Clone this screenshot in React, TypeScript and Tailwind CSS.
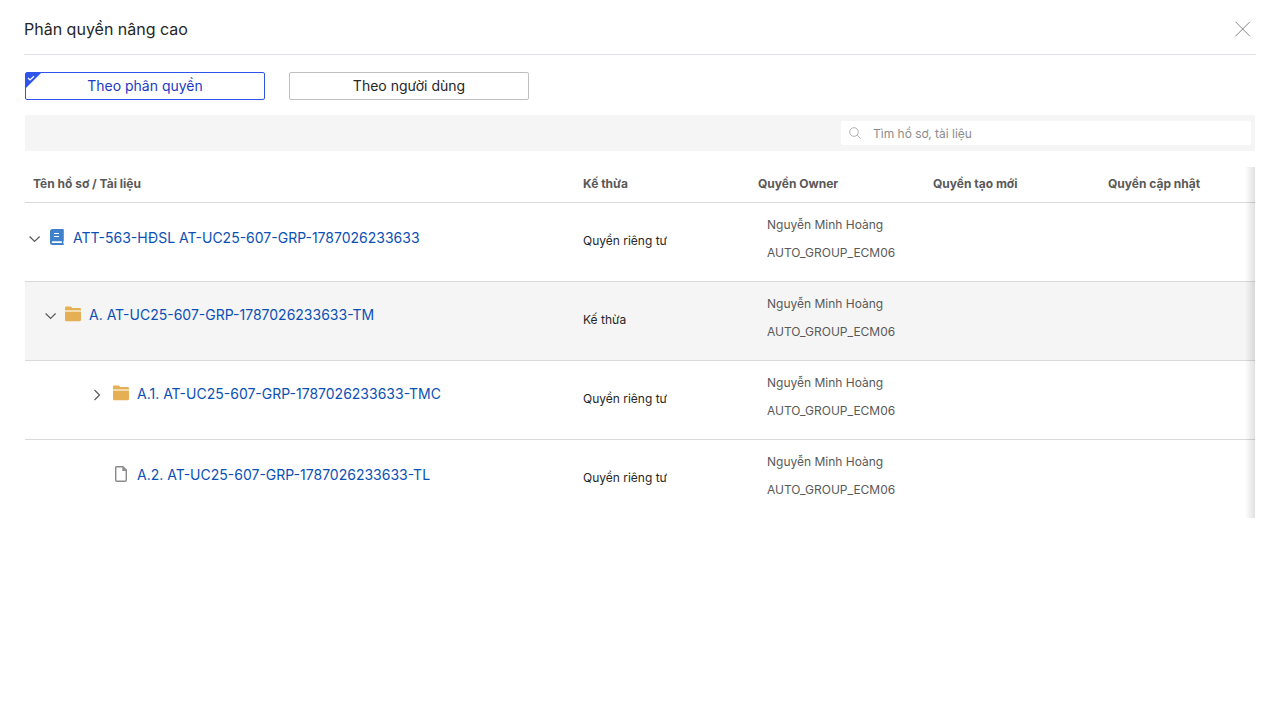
import { useState, type ReactNode } from "react";

type Kind = "profile" | "folder" | "file";

interface Row {
  name: string;
  kind: Kind;
  arrow?: "down" | "right";
  indent: string;
  top: string;
  inherit: string;
  highlighted?: boolean;
}

const owners = ["Nguyễn Minh Hoàng", "AUTO_GROUP_ECM06"];

const rows: Row[] = [
  {
    name: "ATT-563-HĐSL AT-UC25-607-GRP-1787026233633",
    kind: "profile",
    arrow: "down",
    indent: "pl-1",
    top: "pt-[25px]",
    inherit: "Quyền riêng tư",
  },
  {
    name: "A. AT-UC25-607-GRP-1787026233633-TM",
    kind: "folder",
    arrow: "down",
    indent: "pl-5",
    top: "pt-[23px]",
    inherit: "Kế thừa",
    highlighted: true,
  },
  {
    name: "A.1. AT-UC25-607-GRP-1787026233633-TMC",
    kind: "folder",
    arrow: "right",
    indent: "pl-[68px]",
    top: "pt-[23px]",
    inherit: "Quyền riêng tư",
  },
  {
    name: "A.2. AT-UC25-607-GRP-1787026233633-TL",
    kind: "file",
    indent: "pl-[68px]",
    top: "pt-[25px]",
    inherit: "Quyền riêng tư",
  },
];

function KindIcon({ kind }: { kind: Kind }) {
  if (kind === "profile") {
    return (
      <svg className="mb-0.5" width="16" height="16" viewBox="0 0 16 16" aria-hidden="true">
        <path
          d="M3.5 0H13.800a1 1 0 0 1 1 1v10.800a.8.8 0 0 1-.5.8v1.600a.8.8 0 0 1 .5.8V16H3.500A2.500 2.500 0 0 1 1 13.500V2.500A2.500 2.500 0 0 1 3.500 0Z"
          fill="#3f82cb"
        />
        <path d="M3.600 12.200h9.200v1.700H3.600a.85.85 0 0 1 0-1.700ZM5 4h5v1H5ZM5 7h5v1H5Z" fill="#fff" />
      </svg>
    );
  }
  if (kind === "folder") {
    return (
      <svg className="mb-0.5" width="16" height="16" viewBox="0 0 16 16" aria-hidden="true">
        <path d="M0 5V1.800A1.200 1.200 0 0 1 1.200.6h4.600l1.600 1.400h7.400A1.200 1.200 0 0 1 16 3.200V5Z" fill="#e5b055" />
        <path d="M0 4h16v2H0Z" fill="#f3dcae" />
        <path d="M0 6h16v8a1.200 1.200 0 0 1-1.200 1.200H1.200A1.200 1.200 0 0 1 0 14Z" fill="#e5b055" />
      </svg>
    );
  }
  return (
    <svg className="mb-0.5" width="16" height="16" viewBox="0 0 16 16" aria-hidden="true">
      <path
        d="M3.700.8H10L13.300 4v10.100a1.200 1.200 0 0 1-1.200 1.200H3.900a1.200 1.200 0 0 1-1.200-1.200V1.800a1 1 0 0 1 1-1Z"
        fill="#fff"
        stroke="#8a8a8a"
        strokeWidth="1.400"
      />
      <path d="M9.300.8 13.500 5H9.300Z" fill="#8a8a8a" />
    </svg>
  );
}

function Chevron({ direction }: { direction: "down" | "right" }) {
  return (
    <svg width="12" height="12" viewBox="0 0 12 12" fill="none" stroke="#595959" strokeWidth="1.200" aria-hidden="true">
      <path d={direction === "down" ? "M.6 3.500l5 5 5-5" : "M1.500 1l5 5-5 5"} />
    </svg>
  );
}

interface ModeButtonProps {
  active: boolean;
  onClick: () => void;
  children: ReactNode;
}

function ModeButton({ active, onClick, children }: ModeButtonProps) {
  return (
    <button
      type="button"
      aria-pressed={active}
      onClick={onClick}
      className={
        active
          ? "relative h-7 w-60 rounded-xs border border-[#2f54eb] text-sm text-[#1d39c4]"
          : "relative h-7 w-60 rounded-xs border border-[#bfbfbf] text-sm text-[#262626]"
      }
    >
      {active && (
        <svg className="absolute top-0 left-0" width="15" height="15" viewBox="0 0 15 15" aria-hidden="true">
          <path d="M0 0h15L0 15Z" fill="#2f54eb" />
          <path d="M2 5l2 2 4-3.800" fill="none" stroke="#fff" strokeWidth="1.200" />
        </svg>
      )}
      {children}
    </button>
  );
}

export default function App() {
  const [mode, setMode] = useState("permission");
  const [search, setSearch] = useState("");

  return (
    <div className="min-h-screen bg-white px-6 font-['Inter',sans-serif] text-[#262626]">
      <header className="flex h-[55px] items-center justify-between border-b border-[#dfe3e9]">
        <h1 className="pt-1 text-base">Phân quyền nâng cao</h1>
        <button type="button" aria-label="Đóng" className="mr-1 pt-1">
          <svg width="18" height="18" viewBox="0 0 18 18" stroke="#777" strokeWidth="0.900" aria-hidden="true">
            <path d="M1.500 1.800l14.400 14.400M15.900 1.800L1.500 16.200" />
          </svg>
        </button>
      </header>

      <main className="px-px pt-[17px]">
        <div className="flex gap-6">
          <ModeButton active={mode === "permission"} onClick={() => setMode("permission")}>
            Theo phân quyền
          </ModeButton>
          <ModeButton active={mode === "user"} onClick={() => setMode("user")}>
            Theo người dùng
          </ModeButton>
        </div>

        <div className="mt-[15px] flex h-9 items-center justify-end bg-[#f5f5f5]">
          <label className="mr-1 flex h-6 w-1/3 items-center gap-3 rounded-xs bg-white px-2">
            <svg width="12" height="12" viewBox="0 0 12 12" fill="none" stroke="#b0b0b0" aria-hidden="true">
              <circle cx="5" cy="5" r="4.300" />
              <path d="M8.200 8.200l3.500 3.500" />
            </svg>
            <input
              type="text"
              aria-label="Tìm hồ sơ, tài liệu"
              placeholder="Tìm hồ sơ, tài liệu"
              value={search}
              onChange={(e) => setSearch(e.target.value)}
              className="min-w-0 flex-1 pt-0.5 text-xs outline-none placeholder:text-[#8c8c8c]"
            />
          </label>
        </div>

        <div className="relative mt-4">
          <table className="w-full table-fixed border-collapse text-left text-xs">
            <thead>
              <tr className="h-[35px] border-b border-[#d9d9d9] text-[#595959]">
                <th className="px-2 font-bold">Tên hồ sơ / Tài liệu</th>
                <th className="w-[175px] px-2 font-bold">Kế thừa</th>
                <th className="w-[175px] px-2 font-bold">Quyền Owner</th>
                <th className="w-[175px] px-2 font-bold">Quyền tạo mới</th>
                <th className="w-[155px] px-2 font-bold">Quyền cập nhật</th>
              </tr>
            </thead>
            <tbody>
              {rows.map((row) => (
                <tr
                  key={row.name}
                  className={
                    row.highlighted
                      ? "h-[79px] border-b border-[#d9d9d9] bg-[#f5f5f5]"
                      : "h-[79px] border-b border-[#d9d9d9] last:border-b-0"
                  }
                >
                  <td className={`align-top ${row.top} ${row.indent}`}>
                    <div className="flex items-center">
                      <span className="w-5 shrink-0 pt-0.5">{row.arrow && <Chevron direction={row.arrow} />}</span>
                      <KindIcon kind={row.kind} />
                      <a href="#" className="ml-2 truncate text-sm text-[#0b50b5]">
                        {row.name}
                      </a>
                    </div>
                  </td>
                  <td className="px-2 pb-0.5">{row.inherit}</td>
                  <td className="pt-2 pr-2 pl-[17px] align-top text-[#595959]">
                    {owners.map((owner) => (
                      <div key={owner} className="leading-7">
                        {owner}
                      </div>
                    ))}
                  </td>
                  <td />
                  <td />
                </tr>
              ))}
            </tbody>
          </table>
          <div className="pointer-events-none absolute inset-y-0 right-0 w-2.5 bg-linear-to-r from-transparent to-black/12" />
        </div>
      </main>
    </div>
  );
}
